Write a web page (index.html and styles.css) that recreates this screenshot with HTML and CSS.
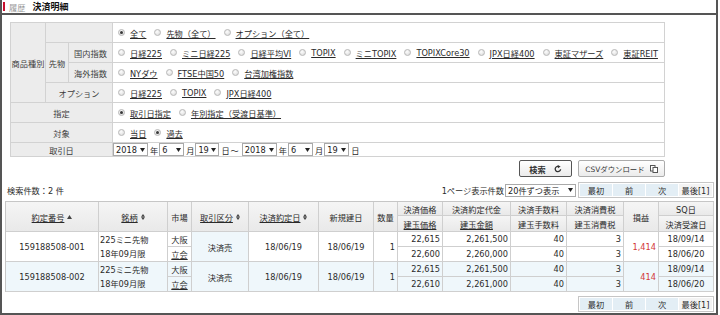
FILE: index.html
```html
<!DOCTYPE html>
<html lang="ja">
<head>
<meta charset="utf-8">
<title>決済明細</title>
<link rel="stylesheet" href="styles.css">
</head>
<body>
<div class="frame">
  <div class="title"><span class="bar"></span><span class="crumb">履歴</span><span class="pagetitle">決済明細</span></div>

  <div class="filter">
    <div class="lab r4">商品種別</div>
    <div class="lab c2"></div>
    <div class="val">
      <span class="opt"><span class="rd on"></span><a class="lnk" href="#">全て</a></span>
      <span class="opt"><span class="rd"></span><a class="lnk" href="#">先物（全て）</a></span>
      <span class="opt"><span class="rd"></span><a class="lnk" href="#">オプション（全て）</a></span>
    </div>
    <div class="lab r2">先物</div>
    <div class="lab">国内指数</div>
    <div class="val">
      <span class="opt"><span class="rd"></span><a class="lnk" href="#">日経225</a></span>
      <span class="opt"><span class="rd"></span><a class="lnk" href="#">ミニ日経225</a></span>
      <span class="opt"><span class="rd"></span><a class="lnk" href="#">日経平均VI</a></span>
      <span class="opt"><span class="rd"></span><a class="lnk" href="#">TOPIX</a></span>
      <span class="opt"><span class="rd"></span><a class="lnk" href="#">ミニTOPIX</a></span>
      <span class="opt"><span class="rd"></span><a class="lnk" href="#">TOPIXCore30</a></span>
      <span class="opt"><span class="rd"></span><a class="lnk" href="#">JPX日経400</a></span>
      <span class="opt"><span class="rd"></span><a class="lnk" href="#">東証マザーズ</a></span>
      <span class="opt"><span class="rd"></span><a class="lnk" href="#">東証REIT</a></span>
    </div>
    <div class="lab">海外指数</div>
    <div class="val">
      <span class="opt"><span class="rd"></span><a class="lnk" href="#">NYダウ</a></span>
      <span class="opt"><span class="rd"></span><a class="lnk" href="#">FTSE中国50</a></span>
      <span class="opt"><span class="rd"></span><a class="lnk" href="#">台湾加権指数</a></span>
    </div>
    <div class="lab c2">オプション</div>
    <div class="val">
      <span class="opt"><span class="rd"></span><a class="lnk" href="#">日経225</a></span>
      <span class="opt"><span class="rd"></span><a class="lnk" href="#">TOPIX</a></span>
      <span class="opt"><span class="rd"></span><a class="lnk" href="#">JPX日経400</a></span>
    </div>
    <div class="lab c3">指定</div>
    <div class="val">
      <span class="opt"><span class="rd on"></span><a class="lnk" href="#">取引日指定</a></span>
      <span class="opt"><span class="rd"></span><a class="lnk" href="#">年別指定（受渡日基準）</a></span>
    </div>
    <div class="lab c3">対象</div>
    <div class="val">
      <span class="opt"><span class="rd"></span><a class="lnk" href="#">当日</a></span>
      <span class="opt"><span class="rd on"></span><a class="lnk" href="#">過去</a></span>
    </div>
    <div class="lab c3">取引日</div>
    <div class="val date">
      <span class="sel w35">2018<svg class="arr" width="5" height="4" viewBox="0 0 5 4"><path d="M0 0H5L2.5 4Z"/></svg></span><span class="unit">年</span>
      <span class="sel w25">6<svg class="arr" width="5" height="4" viewBox="0 0 5 4"><path d="M0 0H5L2.5 4Z"/></svg></span><span class="unit">月</span>
      <span class="sel w24">19<svg class="arr" width="5" height="4" viewBox="0 0 5 4"><path d="M0 0H5L2.5 4Z"/></svg></span><span class="unit">日</span>
      <span class="tilde">～</span>
      <span class="sel w35">2018<svg class="arr" width="5" height="4" viewBox="0 0 5 4"><path d="M0 0H5L2.5 4Z"/></svg></span><span class="unit">年</span>
      <span class="sel w25">6<svg class="arr" width="5" height="4" viewBox="0 0 5 4"><path d="M0 0H5L2.5 4Z"/></svg></span><span class="unit">月</span>
      <span class="sel w25">19<svg class="arr" width="5" height="4" viewBox="0 0 5 4"><path d="M0 0H5L2.5 4Z"/></svg></span><span class="unit">日</span>
    </div>
  </div>

  <div class="actions">
    <button class="btn search" type="button">検索<svg class="ico" width="8" height="8" viewBox="0 0 8 8"><path d="M6.6 4.2A2.7 2.7 0 1 1 4.6 1.4" fill="none" stroke="#333" stroke-width="1.3"/><path d="M3.6 0L6.6 1.4L4 3.2Z" fill="#333"/></svg></button>
    <button class="btn csv" type="button">CSVダウンロード<svg class="ico" width="8" height="8" viewBox="0 0 8 8"><rect x="0.5" y="0.5" width="4.5" height="5.5" fill="#fff" stroke="#555"/><rect x="3" y="2.5" width="4.5" height="5" fill="#fff" stroke="#555"/></svg></button>
  </div>

  <div class="info">
    <div class="count">検索件数：2 件</div>
    <div class="paging">
      <span class="per">1ページ表示件数</span>
      <span class="sel wide">20件ずつ表示<svg class="arr" width="5" height="4" viewBox="0 0 5 4"><path d="M0 0H5L2.5 4Z"/></svg></span>
      <div class="pager"><span>最初</span><span>前</span><span>次</span><span class="last">最後[1]</span></div>
    </div>
  </div>

  <div class="results">
    <div class="h rs2"><a class="lnk" href="#">約定番号</a><svg class="sort" width="5" height="4" viewBox="0 0 5 4"><path d="M2.5 0L5 4H0Z"/></svg></div>
    <div class="h rs2"><a class="lnk" href="#">銘柄</a><svg class="sort" width="4" height="6" viewBox="0 0 4 6"><path d="M2 0L4 2.8H0ZM2 6L0 3.2H4Z"/></svg></div>
    <div class="h rs2">市場</div>
    <div class="h rs2"><a class="lnk" href="#">取引区分</a><svg class="sort" width="4" height="6" viewBox="0 0 4 6"><path d="M2 0L4 2.8H0ZM2 6L0 3.2H4Z"/></svg></div>
    <div class="h rs2"><a class="lnk" href="#">決済約定日</a><svg class="sort" width="4" height="6" viewBox="0 0 4 6"><path d="M2 0L4 2.8H0ZM2 6L0 3.2H4Z"/></svg></div>
    <div class="h rs2">新規建日</div>
    <div class="h rs2">数量</div>
    <div class="h">決済価格</div>
    <div class="h">決済約定代金</div>
    <div class="h">決済手数料</div>
    <div class="h">決済消費税</div>
    <div class="h rs2">損益</div>
    <div class="h">SQ日</div>
    <div class="h"><a class="lnk" href="#">建玉価格</a></div>
    <div class="h"><a class="lnk" href="#">建玉金額</a></div>
    <div class="h">建玉手数料</div>
    <div class="h">建玉消費税</div>
    <div class="h">決済受渡日</div>

    <div class="rs2">159188508-001</div>
    <div class="rs2 name"><span>225ミニ先物</span><span>18年09月限</span></div>
    <div>大阪</div>
    <div class="rs2 tint">決済売</div>
    <div class="rs2">18/06/19</div>
    <div class="rs2">18/06/19</div>
    <div class="rs2 r">1</div>
    <div class="r">22,615</div>
    <div class="r">2,261,500</div>
    <div class="r">40</div>
    <div class="r">3</div>
    <div class="rs2 r pl">1,414</div>
    <div>18/09/14</div>
    <div><a class="lnk" href="#">立会</a></div>
    <div class="r">22,600</div>
    <div class="r">2,260,000</div>
    <div class="r">40</div>
    <div class="r">3</div>
    <div>18/06/20</div>

    <div class="rs2 alt">159188508-002</div>
    <div class="rs2 name alt"><span>225ミニ先物</span><span>18年09月限</span></div>
    <div class="alt">大阪</div>
    <div class="rs2 alt">決済売</div>
    <div class="rs2 alt">18/06/19</div>
    <div class="rs2 alt">18/06/19</div>
    <div class="rs2 r alt">1</div>
    <div class="r alt">22,615</div>
    <div class="r alt">2,261,500</div>
    <div class="r alt">40</div>
    <div class="r alt">3</div>
    <div class="rs2 r pl alt">414</div>
    <div class="alt">18/09/14</div>
    <div class="alt"><a class="lnk" href="#">立会</a></div>
    <div class="r alt">22,610</div>
    <div class="r alt">2,261,000</div>
    <div class="r alt">40</div>
    <div class="r alt">3</div>
    <div class="alt">18/06/20</div>
  </div>

  <div class="bottom">
    <div class="pager"><span>最初</span><span>前</span><span>次</span><span class="last">最後[1]</span></div>
  </div>
</div>
</body>
</html>
```

FILE: styles.css
```css
* { box-sizing: border-box; }

body {
  margin: 0;
  font-family: "DejaVu Sans", "Noto Sans CJK JP", sans-serif;
  font-size: 8.2px;
  color: #2a2a2a;
  background: #fff;
}

.frame {
  width: 718px;
  height: 315px;
  border: 2px solid #555;
  border-top: 0;
}

.title {
  height: 15px;
  border-bottom: 2px solid #555;
  display: flex;
  align-items: center;
}
.bar { width: 2px; height: 9px; background: #c8102e; margin-left: 1px; }
.crumb { color: #999; margin-left: 4px; }
.pagetitle { font-weight: bold; font-size: 9px; color: #111; margin-left: 7px; }

.lnk { color: #2a2a2a; text-decoration: underline; }

/* filter */
.filter {
  display: grid;
  grid-template-columns: 35px 23px 44px 552px;
  grid-template-rows: repeat(6, 20px) 14px;
  width: 655px;
  margin: 7px 0 0 8px;
  border-top: 1px solid #d2d2d2;
  border-left: 1px solid #d2d2d2;
}
.filter > div {
  border-right: 1px solid #d2d2d2;
  border-bottom: 1px solid #d2d2d2;
  display: flex;
  align-items: center;
  white-space: nowrap;
}
.lab { background: #ececec; justify-content: center; color: #3c3c3c; }
.r4 { grid-row: span 4; }
.r2 { grid-row: span 2; }
.c2 { grid-column: span 2; }
.c3 { grid-column: span 3; }
.val { padding-left: 5px; background: #fff; }
.opt { display: inline-flex; align-items: center; margin-right: 8px; }
.rd {
  position: relative;
  width: 7px; height: 7px;
  border: 1px solid #b8b8b8;
  border-radius: 50%;
  background: radial-gradient(circle at 40% 35%, #fdfdfd, #d6d6d6);
  margin-right: 5px;
  flex: none;
}
.rd.on::after {
  content: "";
  position: absolute;
  left: 1px; top: 1px;
  width: 3px; height: 3px;
  border-radius: 50%;
  background: #3a3a3a;
}

.date { padding-left: 0; }
.sel {
  display: inline-flex;
  align-items: center;
  justify-content: space-between;
  height: 13px;
  border: 1px solid #a9a9a9;
  background: #fff;
  padding: 0 2px 0 2px;
  color: #222;
  flex: none;
}
.arr { fill: #222; flex: none; }
.w35 { width: 35px; }
.w25 { width: 25px; }
.w24 { width: 24px; }
.unit { margin: 0 1px 0 2px; }
.tilde { margin: 0 3px 0 0; }

/* actions */
.actions {
  display: flex;
  justify-content: flex-end;
  gap: 6px;
  width: 655px;
  margin: 3px 0 0 8px;
}
.btn {
  height: 17px;
  font: inherit;
  color: #333;
  border-radius: 2px;
  display: flex;
  align-items: center;
  justify-content: center;
  padding: 0;
  background: linear-gradient(#ffffff, #ebebeb);
}
.search { width: 53px; border: 1px solid #555; font-weight: bold; }
.search .ico { margin-left: 8px; }
.csv { width: 87px; border: 1px solid #ababab; font-size: 7.4px; }
.csv .ico { margin-left: 5px; }

/* info */
.info {
  display: flex;
  justify-content: space-between;
  align-items: center;
  height: 16px;
  margin: 5px 2px 0 5px;
}
.paging { display: flex; align-items: center; }
.per { margin-right: 1px; }
.sel.wide { width: 71px; margin-right: 2px; }
.pager {
  display: flex;
  gap: 1px;
  height: 16px;
  padding: 1px;
  border: 1px solid #c6c6c6;
  background: #fff;
}
.pager span {
  width: 32px;
  display: flex;
  align-items: center;
  justify-content: center;
  background: #e3eef5;
}
.pager .last { width: 33px; background: #f3f3f3; }

/* results */
.results {
  display: grid;
  grid-template-columns: 93px 69px 24px 57px 70px 55px 24px 45px 68px 56px 57px 35px 55px;
  grid-template-rows: 14px 16px 15px 15px 15px 15px;
  width: 709px;
  margin: 3px 0 0 3px;
  border-top: 1px solid #c6c6c6;
  border-left: 1px solid #c6c6c6;
}
.results > div {
  border-right: 1px solid #cfcfcf;
  border-bottom: 1px solid #cfcfcf;
  display: flex;
  align-items: center;
  justify-content: center;
  padding: 0 2px;
  white-space: nowrap;
  background: #fff;
}
.results > .h { background: linear-gradient(#f5f5f5, #e9e9e9); }
.rs2 { grid-row: span 2; }
.sort { fill: #444; margin-left: 3px; flex: none; }
.results > .r { justify-content: flex-end; }
.results > .name {
  flex-direction: column;
  align-items: flex-start;
  justify-content: center;
  padding: 0 0 0 1px;
  line-height: 14px;
}
.results > .tint, .results > .alt { background: #eff7fb; }
.pl { color: #d23a3a; }

.bottom {
  display: flex;
  justify-content: flex-end;
  margin: 4px 2px 0 0;
}
```
